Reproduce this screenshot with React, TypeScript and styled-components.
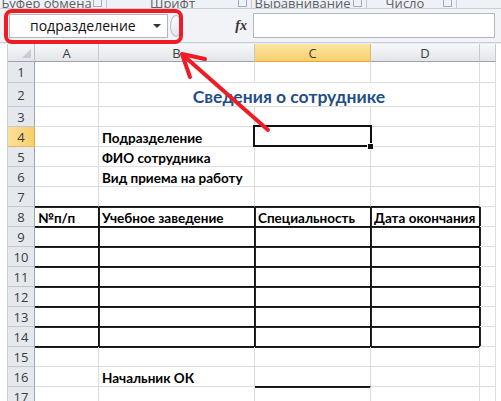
import React from 'react';
import styled, { createGlobalStyle, css } from 'styled-components';

const Global = createGlobalStyle`
  html, body { margin: 0; padding: 0; background: #fff; overflow: hidden; }
  body { font-family: "Lato", "Open Sans", "Liberation Sans", sans-serif; }
`;

const Page = styled.div`
  position: relative;
  width: 501px;
  height: 401px;
  overflow: hidden;
  background: #fff;
`;

/* ---------- ribbon group labels ---------- */
const Ribbon = styled.div`
  display: flex;
  height: 8px;
  overflow: hidden;
  background: #eef1f5;
  border-bottom: 1px solid #c8ced7;
`;

const Group = styled.div<{ $w: number }>`
  flex: 0 0 ${p => p.$w}px;
  display: flex;
  align-items: flex-end;
  border-right: 1px solid #c3c9d2;
  padding-right: 4px;
  box-sizing: border-box;
`;

const GroupLabel = styled.span`
  flex: 1;
  text-align: center;
  font-family: "Open Sans", "Liberation Sans", sans-serif;
  font-size: 13px;
  line-height: 13px;
  color: #5e6165;
  white-space: nowrap;
  margin-bottom: -2px;
`;

const Launcher = styled.span`
  flex: 0 0 7px;
  height: 7px;
  border: 1px solid #a9adb3;
  border-top: none;
  margin-bottom: 1px;
`;

/* ---------- formula bar ---------- */
const FormulaBar = styled.div`
  display: flex;
  align-items: center;
  height: 34px;
  background: #f1f3f6;
  border-bottom: 1px solid #c8ced7;
  padding: 0 6px 0 9px;
  box-sizing: border-box;
`;

const NameBox = styled.div`
  flex: 0 0 159px;
  height: 24px;
  box-sizing: border-box;
  background: #fff;
  border: 1px solid #b2b8c0;
  display: flex;
  align-items: center;
  padding: 0 6px 0 20px;
  font-family: "Open Sans", "Liberation Sans", sans-serif;
  font-size: 14px;
  color: #111;
`;

const NameText = styled.span`
  flex: 1;
`;

const DropArrow = styled.span`
  width: 0;
  height: 0;
  border-left: 4px solid transparent;
  border-right: 4px solid transparent;
  border-top: 4px solid #333;
`;

const Splitter = styled.div`
  flex: 0 0 12px;
  height: 22px;
  margin-left: 2px;
  border-radius: 50%;
  border: 1px solid #b9bec6;
  background: linear-gradient(#fbfbfc, #e3e6ea);
  box-sizing: border-box;
`;

const FxArea = styled.div`
  flex: 0 0 71px;
  display: flex;
  justify-content: flex-end;
  padding-right: 6px;
  box-sizing: border-box;
`;

const Fx = styled.span`
  font-family: "Liberation Serif", "DejaVu Serif", serif;
  font-style: italic;
  font-weight: bold;
  font-size: 14px;
  color: #333;
`;

const FormulaInput = styled.div`
  flex: 1;
  height: 25px;
  background: #fff;
  border: 1px solid #b2b8c0;
  box-sizing: border-box;
`;

const Gap = styled.div`
  height: 1px;
  background: #e9ecf0;
`;

/* ---------- sheet grid ---------- */
const Sheet = styled.div`
  display: grid;
  margin-left: 7px;
  width: 488px;
  grid-template-columns: 27px 64px 156px 116px 109px 16px;
  grid-template-rows: 18px 21px 24px repeat(15, 20px);
  border-left: 1px solid #c8ced7;
  box-sizing: border-box;
`;

const Corner = styled.div`
  position: relative;
  background: linear-gradient(#f6f7f9, #e3e6ea);
  border-right: 1px solid #b9bec6;
  border-bottom: 1px solid #9ea4ab;
  box-sizing: border-box;
  &::after {
    content: '';
    position: absolute;
    right: 3px;
    bottom: 3px;
    width: 0;
    height: 0;
    border-left: 9px solid transparent;
    border-bottom: 9px solid #c9ccd1;
  }
`;

const ColHeader = styled.div<{ $active?: boolean }>`
  display: flex;
  align-items: center;
  justify-content: center;
  font-family: "Open Sans", "Liberation Sans", sans-serif;
  font-size: 13px;
  color: #3c3c3c;
  box-sizing: border-box;
  border-right: 1px solid #c4c9d0;
  border-bottom: 1px solid #9ea4ab;
  background: linear-gradient(#f7f8fa, #e2e5e9);
  ${p => p.$active && css`
    background: linear-gradient(#fbe6a5, #f7cf6b);
    border-bottom: 1px solid #f0a53a;
    border-right: 1px solid #e9b560;
  `}
`;

const RowHeader = styled.div<{ $active?: boolean }>`
  display: flex;
  align-items: center;
  justify-content: center;
  font-family: "Open Sans", "Liberation Sans", sans-serif;
  font-size: 13px;
  color: #3c3c3c;
  box-sizing: border-box;
  border-right: 1px solid #9ea4ab;
  border-bottom: 1px solid #c4c9d0;
  background: #e5e8ec;
  ${p => p.$active && css`
    background: linear-gradient(90deg, #fbe09a, #f7cf6b);
    border-bottom: 1px solid #e9b560;
    border-right: 1px solid #f0a53a;
  `}
`;

const Cell = styled.div<{
  $bb?: boolean;
  $br?: boolean;
  $title?: boolean;
  $span?: number;
  $sel?: boolean;
}>`
  position: relative;
  display: flex;
  align-items: center;
  box-sizing: border-box;
  padding: 2px 0 0 3px;
  white-space: nowrap;
  font-family: "Lato", "Open Sans", sans-serif;
  font-weight: bold;
  font-size: 13.5px;
  color: #000;
  border-right: 1px solid ${p => (p.$br ? '#111' : '#dcdee0')};
  border-bottom: 1px solid ${p => (p.$bb ? '#111' : '#dcdee0')};
  ${p => p.$br && css`box-shadow: 1px 0 0 #222;`}
  ${p => p.$bb && css`box-shadow: 0 1px 0 #222 ${p.$br ? ', 1px 0 0 #222' : ''};`}
  ${p => p.$span && css`grid-column: span ${p.$span};`}
  ${p => p.$title && css`
    justify-content: center;
    padding: 3px 0 0 0;
    font-size: 17.5px;
    color: #1f4e88;
  `}
  ${p => p.$sel && css`
    &::after {
      content: '';
      position: absolute;
      left: -2px;
      top: -2px;
      right: -2px;
      bottom: -1px;
      border: 2px solid #111;
    }
    &::before {
      content: '';
      position: absolute;
      right: -4px;
      bottom: -4px;
      width: 5px;
      height: 5px;
      background: #111;
      border: 1px solid #fff;
      z-index: 2;
    }
  `}
`;

/* ---------- annotations ---------- */
const Highlight = styled.div`
  position: absolute;
  left: 4px;
  top: 9px;
  width: 179px;
  height: 35px;
  box-sizing: border-box;
  border: 4px solid #ee1c24;
  border-radius: 8px;
  pointer-events: none;
`;

const ArrowLayer = styled.svg`
  position: absolute;
  left: 0;
  top: 0;
  width: 501px;
  height: 401px;
  pointer-events: none;
`;

type CellSpec = {
  text?: string;
  bb?: boolean;
  br?: boolean;
  title?: boolean;
  span?: number;
  sel?: boolean;
};

const tableRow = (texts: string[] = ['', '', '', '']): CellSpec[] => [
  { text: texts[0], bb: true, br: true },
  { text: texts[1], bb: true, br: true },
  { text: texts[2], bb: true, br: true },
  { text: texts[3], bb: true, br: true },
  {},
];

const rows: CellSpec[][] = [
  [{}, {}, {}, {}, {}],
  [{}, { text: 'Сведения о сотруднике', title: true, span: 3 }, {}],
  [{}, {}, {}, {}, {}],
  [{}, { text: 'Подразделение' }, { sel: true }, {}, {}],
  [{}, { text: 'ФИО сотрудника' }, {}, {}, {}],
  [{}, { text: 'Вид приема на работу' }, {}, {}, {}],
  [{ bb: true }, { bb: true }, { bb: true }, { bb: true }, {}],
  tableRow(['№п/п', 'Учебное заведение', 'Специальность', 'Дата окончания']),
  tableRow(),
  tableRow(),
  tableRow(),
  tableRow(),
  tableRow(),
  tableRow(),
  [{}, {}, {}, {}, {}],
  [{}, { text: 'Начальник ОК' }, { bb: true }, {}, {}],
  [{}, {}, {}, {}, {}],
];

const groups = [
  { w: 107, label: 'Буфер обмена' },
  { w: 145, label: 'Шрифт' },
  { w: 115, label: 'Выравнивание' },
  { w: 90, label: 'Число' },
];

const cols = ['A', 'B', 'C', 'D'];

export default function App() {
  return (
    <Page>
      <Global />
      <Ribbon>
        {groups.map(g => (
          <Group key={g.label} $w={g.w}>
            <GroupLabel>{g.label}</GroupLabel>
            <Launcher />
          </Group>
        ))}
      </Ribbon>
      <FormulaBar>
        <NameBox>
          <NameText>подразделение</NameText>
          <DropArrow />
        </NameBox>
        <Splitter />
        <FxArea>
          <Fx>fx</Fx>
        </FxArea>
        <FormulaInput />
      </FormulaBar>
      <Gap />
      <Sheet>
        <Corner />
        {cols.map(c => (
          <ColHeader key={c} $active={c === 'C'}>{c}</ColHeader>
        ))}
        <ColHeader />
        {rows.map((r, i) => (
          <React.Fragment key={i}>
            <RowHeader $active={i === 3}>{i + 1}</RowHeader>
            {r.map((c, j) => (
              <Cell
                key={j}
                $bb={c.bb}
                $br={c.br}
                $title={c.title}
                $span={c.span}
                $sel={c.sel}
              >
                {c.text}
              </Cell>
            ))}
          </React.Fragment>
        ))}
      </Sheet>
      <Highlight />
      <ArrowLayer viewBox="0 0 501 401">
        <g stroke="#ee1c24" strokeWidth={4} strokeLinecap="round" strokeLinejoin="round" fill="none">
          <line x1={268} y1={130} x2={184} y2={56} />
          <polyline points="205,59 182,54 190,77" />
        </g>
      </ArrowLayer>
    </Page>
  );
}
